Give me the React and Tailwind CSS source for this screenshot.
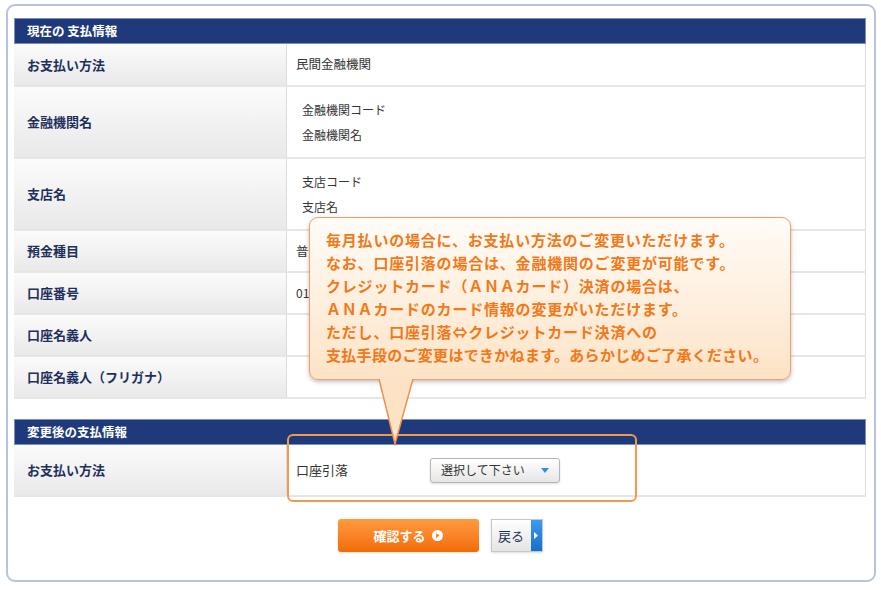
const font = { fontFamily: '"Noto Sans CJK JP", "Noto Sans", sans-serif' };

function SectionHeader({ title }) {
  return (
    <div className="h-[26px] bg-[#1f3a7a] border border-[#7d8fb6] flex items-center pl-[12px]">
      <span className="text-white text-[12.5px] font-bold">{title}</span>
    </div>
  );
}

function Row({ label, h, children }) {
  return (
    <div className="flex border-b-2 border-[#e6e6e6]" style={{ height: h }}>
      <div className="w-[273px] shrink-0 flex items-center pl-[13px] bg-gradient-to-b from-[#fbfbfb] to-[#e9e9e9] border-r border-[#dcdcdc]">
        <span className="text-[13px] font-bold text-[#1f2f5c]">{label}</span>
      </div>
      <div className="flex-1 flex items-center bg-white border-r border-[#dedede] text-[12.5px] text-[#333]">
        {children}
      </div>
    </div>
  );
}

export default function App() {
  return (
    <div className="w-[881px] h-[590px] bg-white relative overflow-hidden" style={font}>
      <div className="absolute left-[6px] top-[4px] w-[870px] h-[578px] border-2 border-[#b7c4dc] rounded-[9px] bg-white pt-[12px] pl-[6px]">
        <div className="w-[852px]">
          <SectionHeader title="現在の 支払情報" />
          <Row label="お支払い方法" h={43}>
            <span className="pl-[9px]">民間金融機関</span>
          </Row>
          <Row label="金融機関名" h={72}>
            <div className="pl-[15px] flex flex-col gap-[7px] text-[12px]">
              <span>金融機関コード</span>
              <span>金融機関名</span>
            </div>
          </Row>
          <Row label="支店名" h={72}>
            <div className="pl-[15px] flex flex-col gap-[7px] text-[12px]">
              <span>支店コード</span>
              <span>支店名</span>
            </div>
          </Row>
          <Row label="預金種目" h={42}>
            <span className="pl-[9px]">普通</span>
          </Row>
          <Row label="口座番号" h={42}>
            <span className="pl-[9px] text-[12px]">0123456</span>
          </Row>
          <Row label="口座名義人" h={42} />
          <Row label="口座名義人（フリガナ）" h={42} />

          <div className="h-[20px]" />
          <SectionHeader title="変更後の支払情報" />
          <Row label="お支払い方法" h={52}>
            <span className="pl-[9px] text-[13px]">口座引落</span>
            <div className="ml-[82px] w-[130px] h-[25px] rounded-[3px] border border-[#b5b5b5] bg-gradient-to-b from-white to-[#e6e6e6] flex items-center justify-between px-[10px] shadow-sm">
              <span className="text-[12px] text-[#333]">選択して下さい</span>
              <svg width="8" height="5" viewBox="0 0 8 5"><polygon points="0,0 8,0 4,5" fill="#3b8fd9" /></svg>
            </div>
          </Row>

          <div className="flex justify-center gap-[12px] mt-[22px]">
            <button className="w-[141px] h-[33px] rounded-[3px] bg-gradient-to-b from-[#ff9b3d] to-[#f26b02] flex items-center justify-center gap-[6px] shadow-sm">
              <span className="text-white text-[13px] font-bold">確認する</span>
              <svg width="11" height="11" viewBox="0 0 11 11">
                <circle cx="5.5" cy="5.5" r="5.5" fill="#fff" />
                <polygon points="4.2,3 7.5,5.5 4.2,8" fill="#f27a14" />
              </svg>
            </button>
            <button className="w-[52px] h-[33px] flex border border-[#c8c8c8] shadow-sm">
              <span className="flex-1 flex items-center justify-center bg-gradient-to-b from-white to-[#e4e4e4] text-[13px] text-[#1f2f5c]">戻る</span>
              <span className="w-[11px] flex items-center justify-center bg-gradient-to-b from-[#3a9cf0] to-[#1470c8]">
                <svg width="4" height="7" viewBox="0 0 4 7"><polygon points="0,0 4,3.5 0,7" fill="#fff" /></svg>
              </span>
            </button>
          </div>
        </div>
      </div>

      {/* highlight around the new payment method */}
      <div className="absolute left-[287px] top-[434px] w-[350px] h-[68px] border-2 border-[#f39a4c] rounded-[6px]" />

      {/* callout */}
      <div className="absolute left-[309px] top-[217px] w-[482px] h-[163px] rounded-[9px] border border-[#efa064] bg-gradient-to-b from-[#fffcf8] to-[#fde3c6] shadow-[0_2px_4px_rgba(0,0,0,0.25)] pl-[16px] pt-[10px]">
        <div className="text-[15px] font-bold text-[#f27818] leading-[23px] tracking-[0.8px]">
          <div>毎月払いの場合に、お支払い方法のご変更いただけます。</div>
          <div>なお、口座引落の場合は、金融機関のご変更が可能です。</div>
          <div>クレジットカード（ＡＮＡカード）決済の場合は、</div>
          <div>ＡＮＡカードのカード情報の変更がいただけます。</div>
          <div>ただし、口座引落⇔クレジットカード決済への</div>
          <div className="tracking-[0.3px]">支払手段のご変更はできかねます。あらかじめご了承ください。</div>
        </div>
      </div>
      <svg className="absolute left-[376px] top-[378px]" width="40" height="68" viewBox="0 0 40 68">
        <polygon points="3,0 37,0 19,66" fill="#fde3c6" />
        <polyline points="3,1 19,66 37,1" fill="none" stroke="#ef9050" strokeWidth="1.5" />
      </svg>
    </div>
  );
}
